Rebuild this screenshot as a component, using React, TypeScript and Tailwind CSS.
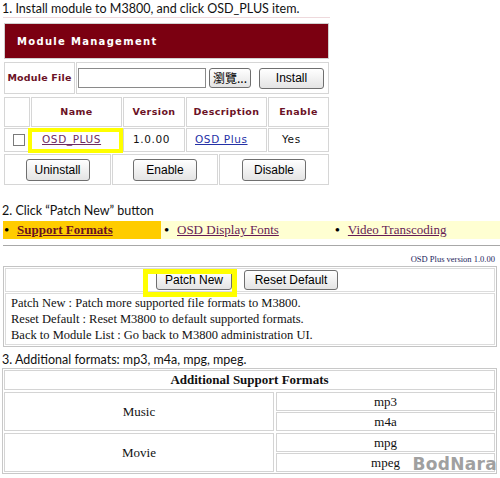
import React from "react";

const btn =
  "flex items-center justify-center rounded-[3px] border border-[#6f6f6f] bg-gradient-to-b from-white to-[#e4e4e4] text-[12px] text-black font-['Liberation_Sans',sans-serif]";

const cell = "border border-[#d6d6d6] flex items-center justify-center";

const serif = "font-['Liberation_Serif',serif]";

function Caption({ children, className = "" }: { children: React.ReactNode; className?: string }) {
  return (
    <div className={`h-[17px] pl-[2px] text-[12.5px] leading-[17px] text-[#111] font-['Lato',sans-serif] ${className}`}>
      {children}
    </div>
  );
}

function ModulePanel() {
  return (
    <div className="ml-[3px] w-[327px] border-t border-[#eed9dc] pt-[5px]">
      <div className="ml-[1px] h-[36px] w-[325px] border border-[#d0d0d0]">
        <div className="flex h-full items-center bg-[#7b0011] pl-[12px] text-[10px] font-bold tracking-[1.3px] text-white font-['DejaVu_Sans',sans-serif]">
          Module Management
        </div>
      </div>

      <div className="mt-[3px] ml-[1px] flex h-[32px] w-[325px] gap-[1px]">
        <div className={`${cell} w-[71px] text-[9.5px] font-bold tracking-[0.2px] text-[#6b1226] font-['DejaVu_Sans',sans-serif]`}>
          Module File
        </div>
        <div className="flex flex-1 items-center border border-[#d6d6d6] pl-[1px]">
          <div className="h-[20px] w-[128px] border border-[#8a8a8a] bg-white" />
          <div className={`${btn} ml-[3px] h-[20px] w-[42px] text-[11px] font-['Noto_Sans_CJK_TC','Liberation_Sans',sans-serif]`}>
            瀏覽...
          </div>
          <div className={`${btn} ml-[8px] h-[21px] w-[65px]`}>Install</div>
        </div>
      </div>

      <div className="mt-[3px] ml-[1px] w-[325px] text-[#111] font-['DejaVu_Sans',sans-serif]">
        <div className="flex h-[30px] gap-[1px] text-[9.5px] font-bold tracking-[0.4px] text-[#6b1226]">
          <div className={`${cell} w-[26px]`} />
          <div className={`${cell} w-[91px]`}>Name</div>
          <div className={`${cell} w-[62px]`}>Version</div>
          <div className={`${cell} w-[81px]`}>Description</div>
          <div className={`${cell} flex-1`}>Enable</div>
        </div>
        <div className="mt-[1px] flex h-[24px] gap-[1px] text-[10.5px] tracking-[0.6px]">
          <div className={`${cell} w-[26px]`}>
            <div className="ml-[3px] h-[12px] w-[12px] border border-[#7a7a7a] bg-white" />
          </div>
          <div className={`${cell} w-[91px] justify-start pl-[10px] text-[#6e2b63] underline`}>OSD_PLUS</div>
          <div className={`${cell} w-[62px] justify-start pl-[9px]`}>1.0.00</div>
          <div className={`${cell} w-[81px] justify-start pl-[8px] text-[#2431a6] underline`}>OSD Plus</div>
          <div className={`${cell} flex-1 justify-start pl-[13px]`}>Yes</div>
        </div>
        <div className="mt-[2px] flex h-[31px] gap-[1px]">
          <div className={`${cell} w-[107px]`}>
            <div className={`${btn} h-[22px] w-[64px]`}>Uninstall</div>
          </div>
          <div className={`${cell} w-[106px]`}>
            <div className={`${btn} h-[22px] w-[64px]`}>Enable</div>
          </div>
          <div className={`${cell} flex-1`}>
            <div className={`${btn} h-[22px] w-[64px]`}>Disable</div>
          </div>
        </div>
      </div>
    </div>
  );
}

function PatchPanel() {
  return (
    <div>
      <div className={`mt-[2px] ml-[3px] flex h-[18px] items-center text-[13px] ${serif}`}>
        <div className="flex h-full w-[158px] items-center bg-[#ffcc00] pl-[1px]">
          <span className="w-[13px] text-[15px] leading-[18px]">•</span>
          <span className="font-bold text-[#6b1020] underline">Support Formats</span>
        </div>
        <div className="flex h-full flex-1 items-center bg-[#ffffd2]">
          <span className="ml-[3px] w-[13px] text-[15px] leading-[18px]">•</span>
          <span className="text-[#661a55] underline">OSD Display Fonts</span>
          <span className="ml-[56px] w-[13px] text-[15px] leading-[18px]">•</span>
          <span className="text-[#661a55] underline">Video Transcoding</span>
        </div>
      </div>
      <div className="mt-[6px] ml-[3px] border-t border-[#a8a8a8]" />
      <div className={`h-[20px] pr-[5px] pt-[8px] text-right text-[8.5px] leading-[10px] text-[#1c1c5c] ${serif}`}>
        OSD Plus version 1.0.00
      </div>
      <div className={`ml-[3px] w-[494px] border border-[#c4c4c4] p-px text-[12.5px] leading-[16px] text-[#111] ${serif}`}>
        <div className="flex h-[24px] items-center justify-center gap-[12px] border border-[#dcdcdc] pr-[6px]">
          <div className={`${btn} h-[19px] w-[76px]`}>Patch New</div>
          <div className={`${btn} h-[20px] w-[94px]`}>Reset Default</div>
        </div>
        <div className="mt-px border border-[#dcdcdc] px-[5px] py-[1px]">
          <div>Patch New : Patch more supported file formats to M3800.</div>
          <div>Reset Default : Reset M3800 to default supported formats.</div>
          <div>Back to Module List : Go back to M3800 administration UI.</div>
        </div>
      </div>
    </div>
  );
}

function FormatsTable() {
  const groups = [
    { name: "Music", items: ["mp3", "m4a"] },
    { name: "Movie", items: ["mpg", "mpeg"] },
  ];
  return (
    <div className={`ml-[2px] w-[495px] border border-[#c8c8c8] p-px text-[13px] text-[#111] ${serif}`}>
      <div className="flex h-[20px] items-center justify-center border border-[#d4d4d4] font-bold">
        Additional Support Formats
      </div>
      {groups.map((g) => (
        <div key={g.name} className="mt-[2px] flex gap-[2px]">
          <div className="flex w-[270px] items-center justify-center border border-[#d4d4d4]">{g.name}</div>
          <div className="flex flex-1 flex-col gap-[1px]">
            {g.items.map((it) => (
              <div key={it} className="flex h-[19px] items-center justify-center border border-[#d4d4d4]">
                {it}
              </div>
            ))}
          </div>
        </div>
      ))}
    </div>
  );
}

export default function App() {
  return (
    <div className="relative h-[478px] w-[500px] overflow-hidden bg-white">
      <Caption>1. Install module to M3800, and click OSD_PLUS item.</Caption>
      <ModulePanel />
      <Caption className="mt-[17px]">2. Click “Patch New” button</Caption>
      <PatchPanel />
      <Caption className="mt-[4px]">3. Additional formats: mp3, m4a, mpg, mpeg.</Caption>
      <FormatsTable />

      {/* highlight boxes drawn over the screenshot */}
      <div className="absolute left-[28px] top-[128px] h-[25px] w-[95px] border-[4px] border-[#ffff00]" />
      <div className="absolute left-[143px] top-[269px] h-[28px] w-[94px] border-[5px] border-[#ffff00]" />

      <div className="absolute bottom-[1px] right-[3px] text-[17px] font-bold tracking-[0.3px] text-[#a0a0a0] font-['DejaVu_Sans',sans-serif]">
        BodNara
      </div>
    </div>
  );
}
